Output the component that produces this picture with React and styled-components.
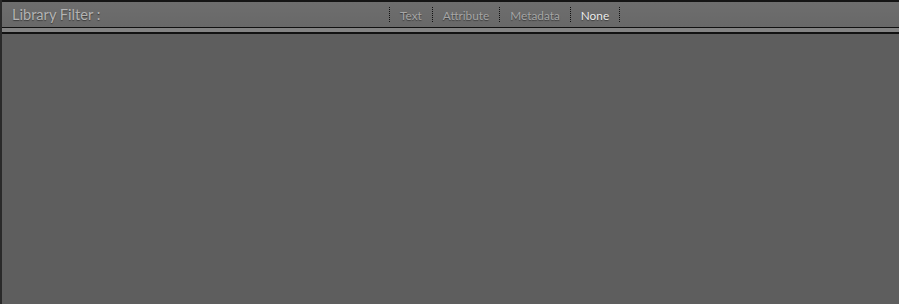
import React from 'react';
import styled, { createGlobalStyle } from 'styled-components';

const Global = createGlobalStyle`
  html, body { margin: 0; padding: 0; background: #5e5e5e; }
  body { font-family: Lato, "Open Sans", sans-serif; }
`;

const Frame = styled.div`
  width: 899px;
  height: 304px;
  display: flex;
  flex-direction: column;
  background: #5e5e5e;
  border-left: 2px solid #2a2a2a;
  box-sizing: border-box;
  overflow: hidden;
`;

const Header = styled.div`
  height: 25px;
  display: flex;
  align-items: center;
  background: linear-gradient(#6e6e6e, #686868);
  border-top: 2px solid #151515;
`;

const Title = styled.div`
  padding-left: 10px;
  width: 377px;
  font-size: 14.6px;
  color: #b4b4b4;
  text-shadow: 0 1px 1px rgba(0, 0, 0, 0.45);
`;

const Filters = styled.div`
  display: flex;
  align-items: center;
  height: 15px;
  border-left: 1px dotted #111;
`;

const Filter = styled.div`
  padding: 1px 10px 0;
  height: 14px;
  display: flex;
  align-items: center;
  font-size: 11.8px;
  color: ${p => (p.$active ? '#ececec' : '#a6a6a6')};
  border-right: 1px dotted #111;
  text-shadow: 0 1px 1px rgba(0, 0, 0, 0.45);
`;

const Rule = styled.div`
  height: 4px;
  border-top: 1px solid #111;
  border-bottom: 2px solid #111;
  background: #838383;
`;

const Body = styled.div`
  flex: 1;
  background: #5e5e5e;
`;

export default function App() {
  return (
    <>
      <Global />
      <Frame>
        <Header>
          <Title>Library Filter :</Title>
          <Filters>
            <Filter>Text</Filter>
            <Filter>Attribute</Filter>
            <Filter>Metadata</Filter>
            <Filter $active>None</Filter>
          </Filters>
        </Header>
        <Rule />
        <Body />
      </Frame>
    </>
  );
}
